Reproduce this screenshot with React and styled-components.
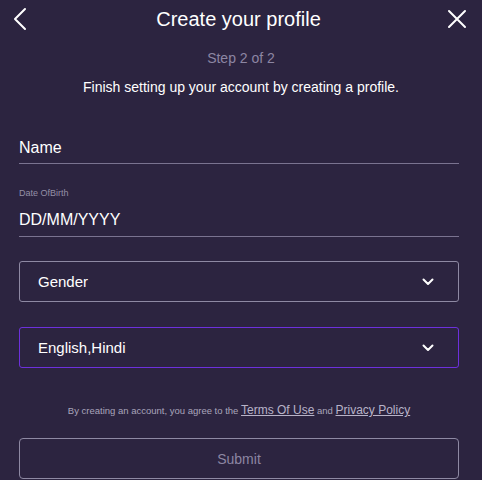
import React from "react";
import styled, { createGlobalStyle } from "styled-components";

const GlobalStyle = createGlobalStyle`
  html, body {
    margin: 0;
    padding: 0;
    background: #2c2440;
    font-family: "Liberation Sans", Arial, sans-serif;
  }
`;

const Page = styled.div`
  width: 482px;
  height: 480px;
  background: #2c2440;
  color: #ffffff;
  box-sizing: border-box;
  overflow: hidden;
`;

const Header = styled.div`
  display: flex;
  align-items: center;
  justify-content: space-between;
  height: 38px;
  padding: 0 12px 0 7px;
`;

const IconButton = styled.button`
  background: none;
  border: none;
  padding: 0;
  width: 26px;
  height: 26px;
  display: flex;
  align-items: center;
  justify-content: center;
  cursor: pointer;
`;

const Title = styled.h1`
  margin: 0;
  font-size: 20px;
  font-weight: 400;
  color: #ffffff;
`;

const Step = styled.div`
  text-align: center;
  font-size: 14px;
  color: #8c86a3;
  margin-top: 12px;
`;

const Intro = styled.p`
  text-align: center;
  font-size: 14px;
  color: #ffffff;
  margin: 13px 0 0;
`;

const Form = styled.div`
  padding: 0 23px 0 19px;
  display: flex;
  flex-direction: column;
`;

const LineField = styled.div`
  border-bottom: 1px solid #7a7390;
  display: flex;
  flex-direction: column;
  margin-top: ${(p) => p.$top}px;
`;

const SmallLabel = styled.span`
  font-size: 9px;
  color: #948fa6;
  margin-bottom: 13px;
`;

const LineValue = styled.span`
  font-size: ${(p) => p.$size}px;
  color: #ffffff;
  padding-bottom: ${(p) => p.$pad}px;
`;

const Select = styled.div`
  height: 41px;
  box-sizing: border-box;
  border: 1px solid ${(p) => (p.$active ? "#6d30dc" : "#8e89a3")};
  border-radius: 3px;
  display: flex;
  align-items: center;
  justify-content: space-between;
  padding: 0 24px 0 18px;
  margin-top: ${(p) => p.$top}px;
  font-size: 15px;
  color: #ffffff;
`;

const Terms = styled.p`
  margin: 35px 0 0;
  text-align: center;
  font-size: 9.5px;
  color: #a9a4bb;
`;

const Link = styled.a`
  font-size: 12px;
  color: #b8b3c8;
  text-decoration: underline;
`;

const Submit = styled.button`
  margin-top: 21px;
  height: 41px;
  border: 1px solid #8e89a3;
  border-radius: 4px;
  background: transparent;
  color: #8c86a3;
  font-family: "Liberation Sans", Arial, sans-serif;
  font-size: 14px;
  width: 100%;
`;

const Chevron = () => (
  <svg width="12" height="8" viewBox="0 0 12 8" fill="none">
    <path d="M1.5 1.5L6 6L10.5 1.5" stroke="#fff" strokeWidth="2" strokeLinecap="round" strokeLinejoin="round" />
  </svg>
);

export default function App() {
  return (
    <>
      <GlobalStyle />
      <Page>
        <Header>
          <IconButton aria-label="back">
            <svg width="16" height="24" viewBox="0 0 16 24" fill="none">
              <path d="M13 2L3 12L13 22" stroke="#fff" strokeWidth="2" strokeLinecap="round" strokeLinejoin="round" />
            </svg>
          </IconButton>
          <Title>Create your profile</Title>
          <IconButton aria-label="close">
            <svg width="20" height="20" viewBox="0 0 20 20" fill="none">
              <path d="M2 2L18 18M18 2L2 18" stroke="#fff" strokeWidth="2" strokeLinecap="round" />
            </svg>
          </IconButton>
        </Header>
        <Step>Step 2 of 2</Step>
        <Intro>Finish setting up your account by creating a profile.</Intro>
        <Form>
          <LineField $top={44}>
            <LineValue $size={16} $pad={6}>Name</LineValue>
          </LineField>
          <LineField $top={24}>
            <SmallLabel>Date OfBirth</SmallLabel>
            <LineValue $size={16} $pad={7}>DD/MM/YYYY</LineValue>
          </LineField>
          <Select $top={24}>
            Gender
            <Chevron />
          </Select>
          <Select $top={25} $active>
            English,Hindi
            <Chevron />
          </Select>
          <Terms>
            By creating an account, you agree to the <Link>Terms Of Use</Link> and{" "}
            <Link>Privacy Policy</Link>
          </Terms>
          <Submit>Submit</Submit>
        </Form>
      </Page>
    </>
  );
}
